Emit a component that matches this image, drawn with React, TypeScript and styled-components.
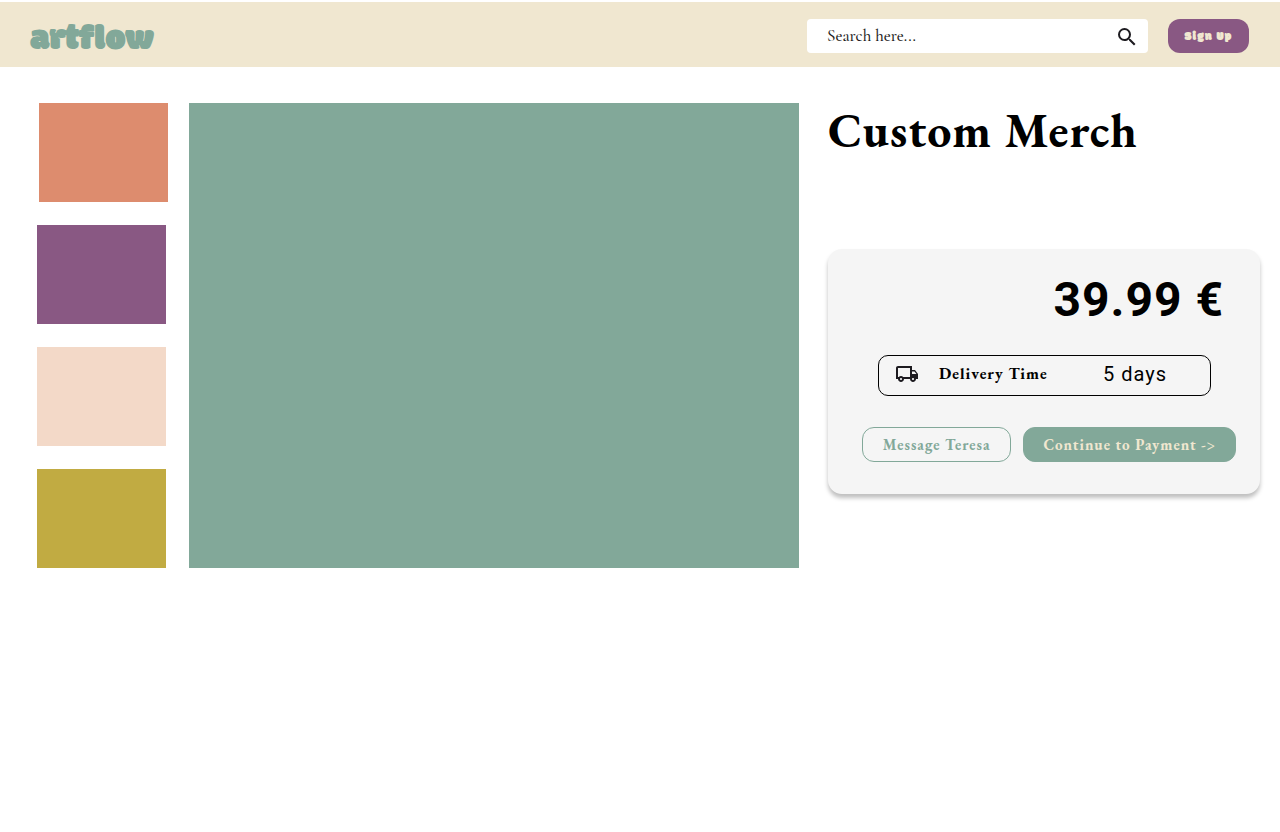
import React from 'react';
import styled, { createGlobalStyle } from 'styled-components';
import { MdOutlineLocalShipping, MdSearch } from 'react-icons/md';

const sage = '#82a899';
const cream = '#f0e7d0';
const plum = '#895883';
const serif = '"EB Garamond", "Liberation Serif", serif';
const display = 'Modak, Lato, sans-serif';

const GlobalStyle = createGlobalStyle`
  *, *::before, *::after { box-sizing: border-box; }
  body { margin: 0; background: #fff; color: #000; font-family: ${serif}; }
  button, input { font: inherit; }
  button { cursor: pointer; }
`;

const Header = styled.header`
  display: flex;
  align-items: center;
  gap: 20px;
  margin-top: 2px;
  padding: 17px 31px 14px 30px;
  background: ${cream};
`;

const Logo = styled.a`
  height: 34px;
  margin-right: auto;
  color: ${sage};
  font: 400 36px/42px ${display};
  text-decoration: none;
`;

const SearchForm = styled.form`
  display: flex;
  align-items: center;
  flex: 0 1 341px;
  height: 34px;
  padding: 0 9px 0 20px;
  border-radius: 4px;
  background: #fff;
`;

const SearchInput = styled.input`
  flex: 1;
  min-width: 0;
  padding: 0;
  border: 0;
  outline: 0;
  background: transparent;
  color: #1d1b20;
  font: 500 17px/24px "Cormorant Garamond", ${serif};
  &::placeholder { color: #1d1b20; opacity: 1; }
`;

const IconButton = styled.button`
  display: flex;
  padding: 2px 0 0;
  border: 0;
  background: none;
  color: #1d1b20;
`;

const SignUp = styled.button`
  width: 81px;
  height: 34px;
  padding: 2px 0 0;
  border: 0;
  border-radius: 12px;
  background: ${plum};
  color: ${cream};
  font: 400 12px/32px ${display};
  letter-spacing: 1px;
`;

const Main = styled.main`
  display: flex;
  align-items: flex-start;
  padding: 36px 20px 36px 37px;
`;

const Thumbnails = styled.div`
  display: flex;
  flex: none;
  flex-direction: column;
  gap: 23px;
  width: 131px;
  margin-right: 21px;
`;

const Thumbnail = styled.button<{ $color: string; $selected?: boolean }>`
  align-self: ${p => (p.$selected ? 'flex-end' : 'flex-start')};
  width: 129px;
  height: 99px;
  padding: 0;
  border: 0;
  background: ${p => p.$color};
`;

const Preview = styled.div`
  flex: 1;
  align-self: stretch;
  margin-right: 29px;
  background: ${sage};
`;

const Details = styled.section`
  flex: 0 0 432px;
`;

const Title = styled.h1`
  margin: 0 0 92px;
  font-size: 48px;
  line-height: 54px;
  font-weight: 700;
  letter-spacing: 1px;
`;

const Card = styled.div`
  padding: 22px 24px 32px 34px;
  border-radius: 14px;
  background: #f5f5f5;
  box-shadow: 0 4px 4px rgba(0, 0, 0, 0.25);
`;

const Price = styled.p`
  margin: 0 12px 26px 0;
  text-align: right;
  font: 700 48px/58px Roboto, sans-serif;
  letter-spacing: 1px;
`;

const Delivery = styled.div`
  display: flex;
  align-items: center;
  height: 41px;
  margin: 0 25px 31px 16px;
  padding: 0 43px 4px 16px;
  border: 1px solid #000;
  border-radius: 10px;
`;

const DeliveryLabel = styled.span`
  margin-left: 20px;
  font-size: 16px;
  font-weight: 700;
  letter-spacing: 1px;
`;

const DeliveryValue = styled.span`
  margin-left: auto;
  font: 400 20px/24px Roboto, sans-serif;
  letter-spacing: 1px;
`;

const Actions = styled.div`
  display: flex;
  align-items: center;
  gap: 12px;
`;

const Action = styled.button<{ $primary?: boolean }>`
  flex: ${p => (p.$primary ? '213 1 0' : '149 1 0')};
  height: 35px;
  padding: 0;
  border: 1px solid ${sage};
  border-radius: 12px;
  background: ${p => (p.$primary ? sage : 'transparent')};
  color: ${p => (p.$primary ? cream : sage)};
  font-size: 15px;
  font-weight: 700;
  letter-spacing: 1px;
  white-space: nowrap;
`;

const thumbnails = [
  { name: 'Coral', color: '#dd8c6e' },
  { name: 'Plum', color: plum },
  { name: 'Blush', color: '#f3d9c8' },
  { name: 'Mustard', color: '#c1ab42' },
];

export default function App() {
  return (
    <>
      <GlobalStyle />
      <Header>
        <Logo href="#">artflow</Logo>
        <SearchForm role="search" onSubmit={e => e.preventDefault()}>
          <SearchInput type="text" aria-label="Search" placeholder="Search here..." />
          <IconButton type="submit" aria-label="Submit search">
            <MdSearch size={24} />
          </IconButton>
        </SearchForm>
        <SignUp type="button">Sign Up</SignUp>
      </Header>
      <Main>
        <Thumbnails>
          {thumbnails.map((t, i) => (
            <Thumbnail key={t.name} type="button" aria-label={t.name} $color={t.color} $selected={i === 0} />
          ))}
        </Thumbnails>
        <Preview />
        <Details>
          <Title>Custom Merch</Title>
          <Card>
            <Price>39.99 €</Price>
            <Delivery>
              <MdOutlineLocalShipping size={24} color="#1d1b20" />
              <DeliveryLabel>Delivery Time</DeliveryLabel>
              <DeliveryValue>5 days</DeliveryValue>
            </Delivery>
            <Actions>
              <Action type="button">Message Teresa</Action>
              <Action type="button" $primary>Continue to Payment -&gt;</Action>
            </Actions>
          </Card>
        </Details>
      </Main>
    </>
  );
}
